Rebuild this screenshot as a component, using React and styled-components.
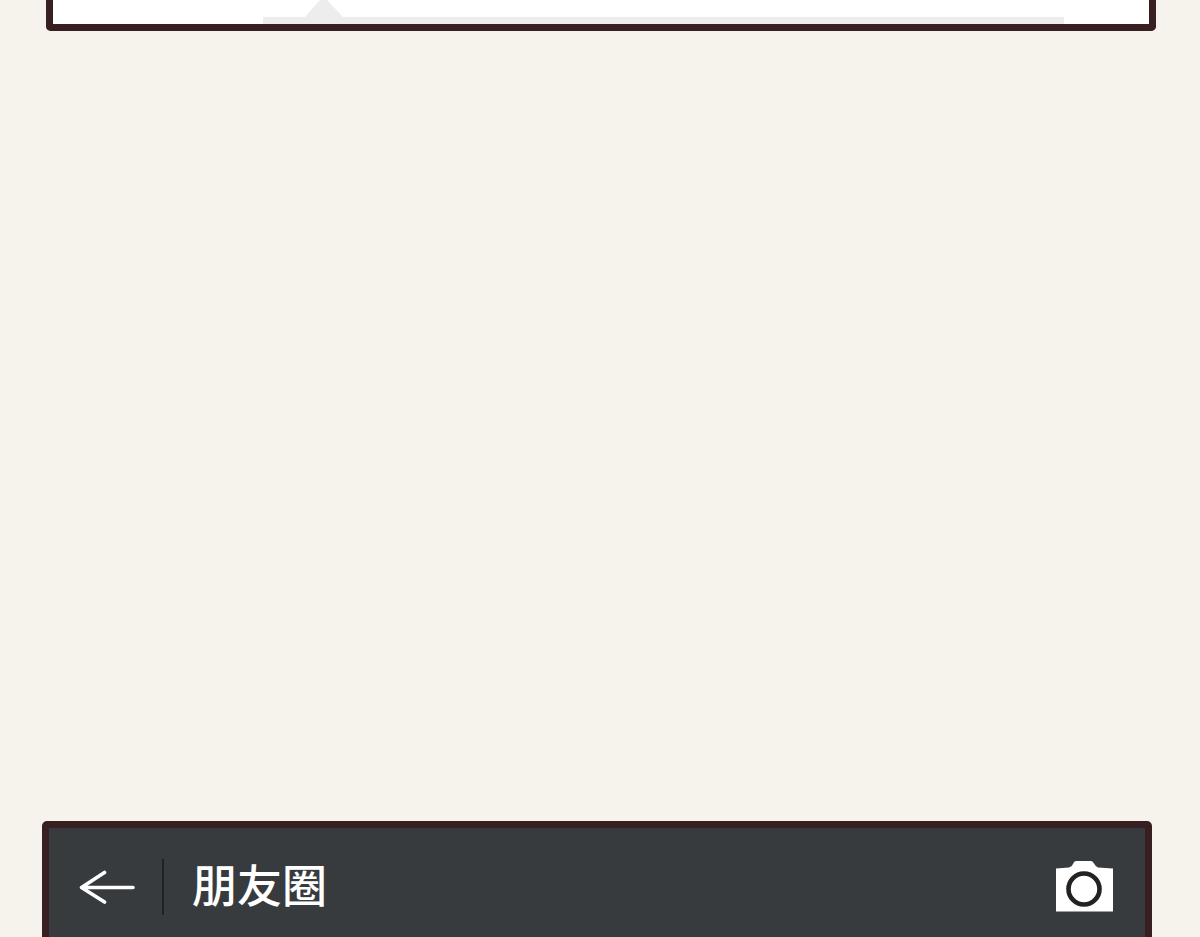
import styled, { createGlobalStyle } from 'styled-components';

const App = () => {
	return (
		<>
			<GlobalStyle />
			<Page>
				<PostPanel>
					<BubbleTip viewBox='0 0 38 17' aria-hidden='true'>
						<path d='M0 17 L15 0 H22 L38 17 Z' />
					</BubbleTip>
					<CommentBubble />
				</PostPanel>
				<MomentsPanel>
					<Header>
						<IconButton type='button' aria-label='返回' $width={56}>
							<svg width='56' height='34' viewBox='0 0 56 34'>
								<path
									d='M25.5 2.5 L2.5 17.5 L25.5 32 M2.5 17.5 H54'
									fill='none'
									stroke='#fff'
									strokeWidth='3.6'
									strokeLinecap='round'
									strokeLinejoin='round'
								/>
							</svg>
						</IconButton>
						<Divider />
						<Title>朋友圈</Title>
						<IconButton type='button' aria-label='相机' $width={58}>
							<svg width='58' height='52' viewBox='0 0 58 52'>
								<path
									d='M1 7.5 L14 6.5 Q17 6 18 3 Q19 0 21 0 H36 Q38 0 39 2.5 Q41 6 43 6.5 L58 7.5 V50.5 H1 Z'
									fill='#fff'
								/>
								<circle
									cx='29'
									cy='28'
									r='15.5'
									fill='none'
									stroke='#202224'
									strokeWidth='4.6'
								/>
							</svg>
						</IconButton>
					</Header>
				</MomentsPanel>
			</Page>
		</>
	);
};

const GlobalStyle = createGlobalStyle`
	* {
		box-sizing: border-box;
	}

	body {
		margin: 0;
		background: #f6f3ec;
		font-family: 'Noto Sans CJK SC', sans-serif;
	}
`;

const Page = styled.main`
	height: 100vh;
	overflow: hidden;
	display: flex;
	flex-direction: column;
	gap: 790px;
`;

const Panel = styled.section`
	flex-shrink: 0;
	border: 7px solid #381f22;
`;

const PostPanel = styled(Panel)`
	margin: 0 44px 0 46px;
	padding: 0 85px 0 210px;
	border-top: none;
	border-radius: 0 0 5px 5px;
	background: #fff;
`;

const BubbleTip = styled.svg`
	display: block;
	width: 38px;
	height: 17px;
	margin-left: 42px;
	fill: #ededed;
`;

const CommentBubble = styled.div`
	height: 7px;
	background: #ededed;
`;

const MomentsPanel = styled(Panel)`
	margin: 0 48px 0 42px;
	border-radius: 5px 5px 0 0;
	background: #373b3e;
`;

const Header = styled.header`
	display: flex;
	align-items: center;
	height: 118px;
	padding: 0 32px 0 30px;
`;

const IconButton = styled.button`
	display: grid;
	place-items: center;
	flex-shrink: 0;
	width: ${({ $width }) => $width}px;
	padding: 0;
	border: none;
	background: none;
	cursor: pointer;
`;

const Divider = styled.span`
	width: 2px;
	height: 56px;
	margin: 0 28px 0 27px;
	background: #1f2122;
`;

const Title = styled.h1`
	flex: 1;
	margin: 0;
	padding-bottom: 6px;
	color: #fff;
	font-size: 45px;
	font-weight: 500;
	line-height: 60px;
`;

export default App;
